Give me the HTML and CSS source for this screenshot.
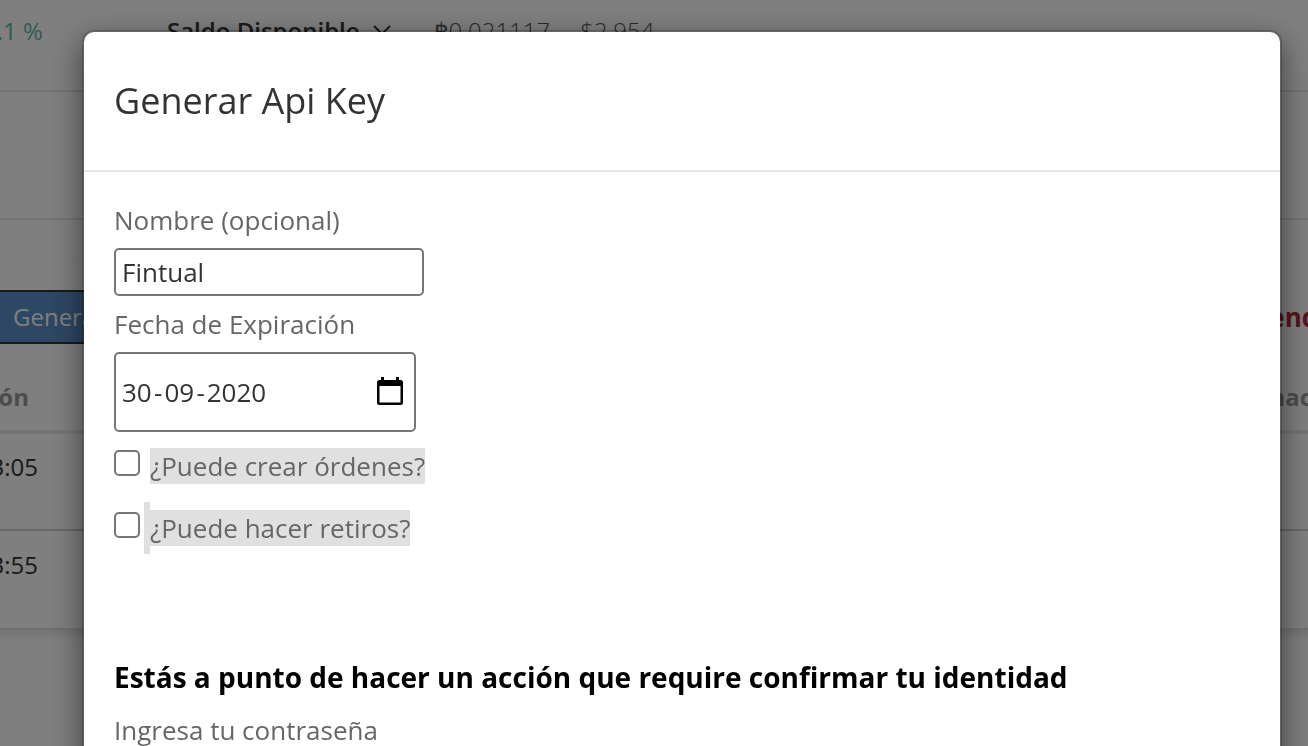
FILE: index.html
```html
<!DOCTYPE html>
<html lang="es">
<head>
<meta charset="utf-8">
<title>Generar Api Key</title>
<link rel="stylesheet" href="styles.css">
</head>
<body>
<div class="page">
  <header class="topbar">
    <span class="change">2.1 %</span>
    <button class="balance" type="button">Saldo Disponible
      <svg class="chevron" viewBox="0 0 20 12" aria-hidden="true"><path d="M2 2l8 8 8-8"/></svg>
    </button>
    <span class="amount">฿0.021117</span>
    <span class="amount">$2.954</span>
  </header>
  <div class="subbar"></div>
  <div class="spacer"></div>
  <main class="card">
    <div class="toolbar">
      <button class="generate" type="button">Generar Api Key</button>
      <strong class="pending">Pendientes</strong>
    </div>
    <table class="keys">
      <thead>
        <tr><th class="created">Creación</th><th class="state">Inactiva</th></tr>
      </thead>
      <tbody>
        <tr><td class="created">13:05</td><td class="state"></td></tr>
        <tr><td class="created">13:55</td><td class="state"></td></tr>
      </tbody>
    </table>
  </main>
</div>

<div class="backdrop">
  <div class="modal" role="dialog" aria-labelledby="modal-title">
    <div class="modal-header"><h1 class="modal-title" id="modal-title">Generar Api Key</h1></div>
    <form class="modal-body">
      <label class="label" for="name">Nombre (opcional)</label>
      <input class="field" id="name" type="text" value="Fintual">
      <label class="label" for="day">Fecha de Expiración</label>
      <div class="date">
        <input class="part" id="day" type="text" value="30" aria-label="Día"><span>-</span>
        <input class="part" type="text" value="09" aria-label="Mes"><span>-</span>
        <input class="part year" type="text" value="2020" aria-label="Año">
        <button class="picker" type="button" aria-label="Abrir calendario">
          <svg class="calendar" viewBox="0 0 26 28" aria-hidden="true"><path fill-rule="evenodd" d="M4 0h3v3h12V0h3v3h1.500a2.500 2.500 0 0 1 2.500 2.500v20a2.500 2.500 0 0 1-2.500 2.500h-21A2.500 2.500 0 0 1 0 25.500v-20A2.500 2.500 0 0 1 2.500 3H4zM2.500 9v16.500h21V9z"/></svg>
        </button>
      </div>
      <div class="check">
        <input class="box" id="orders" type="checkbox">
        <label for="orders"><mark class="selected">¿Puede crear órdenes?</mark></label>
      </div>
      <div class="check">
        <input class="box" id="withdraw" type="checkbox">
        <span class="caret-block"></span>
        <label for="withdraw"><mark class="selected">¿Puede hacer retiros?</mark></label>
      </div>
      <h2 class="confirm">Estás a punto de hacer un acción que require confirmar tu identidad</h2>
      <label class="label" for="password">Ingresa tu contraseña</label>
      <input class="field" id="password" type="password">
    </form>
  </div>
</div>
</body>
</html>
```
FILE: styles.css
```css
* { box-sizing: border-box; }

html, body { height: 100%; }

body {
  margin: 0;
  overflow: hidden;
  background: #fefefe;
  color: #333;
  font-family: "Open Sans", "Noto Sans", sans-serif;
  font-size: 26px;
}

button, input {
  font: inherit;
  color: inherit;
  margin: 0;
}

.page { margin: 0 -120px; }

.topbar {
  display: flex;
  align-items: center;
  height: 92px;
  padding: 0 0 30px 103px;
  border-bottom: 2px solid #e6e6e6;
  font-size: 24px;
  white-space: nowrap;
}

.change { width: 70px; color: #5fb8a8; }

.balance {
  display: flex;
  align-items: center;
  gap: 12px;
  margin-left: 114px;
  margin-right: 42px;
  padding: 0;
  border: 0;
  background: none;
  font-weight: 600;
}

.chevron {
  width: 20px;
  height: 12px;
  fill: none;
  stroke: #333;
  stroke-width: 2;
}

.amount { margin-right: 30px; color: #555; font-weight: 300; }

.subbar { height: 128px; border-bottom: 2px solid #e8e8e8; }

.spacer { height: 40px; }

.card {
  padding-top: 30px;
  background: #fff;
  box-shadow: 0 6px 14px -4px rgba(0, 0, 0, 0.2);
}

.toolbar {
  display: flex;
  align-items: center;
  justify-content: space-between;
}

.generate {
  height: 54px;
  padding: 0 24px 2px;
  margin-left: 107px;
  border: 2px solid #333;
  background: #5a8fc8;
  color: #fff;
  font-size: 24px;
}

.pending { width: 175px; color: #b02a30; }

.keys {
  width: 100%;
  border-collapse: collapse;
  table-layout: fixed;
  font-size: 24px;
}

.keys th {
  height: 88px;
  padding: 18px 0 0;
  border-bottom: 4px solid #eaeaea;
  color: #999;
  font-weight: 700;
}

.keys td { height: 98px; padding: 0 0 30px; }

.keys tr + tr td { border-top: 2px solid #cfcfcf; }

.keys .created { width: 158px; text-align: right; }

.keys th.created { padding-right: 9px; }

.keys .state { text-align: right; }

.keys th.state { padding-right: 70px; }

.backdrop {
  position: fixed;
  inset: 0;
  overflow: hidden;
  padding: 30px 26px 30px 82px;
  background: rgba(0, 0, 0, 0.5);
}

.modal {
  border: 2px solid rgba(0, 0, 0, 0.2);
  border-radius: 12px;
  background: #fff;
  background-clip: padding-box;
  box-shadow: 0 10px 30px rgba(0, 0, 0, 0.5);
}

.modal-header { padding: 30px; border-bottom: 2px solid #e5e5e5; }

.modal-title {
  margin: 0;
  font-size: 36px;
  font-weight: 400;
  line-height: 78px;
}

.modal-body {
  display: flex;
  flex-direction: column;
  align-items: flex-start;
  padding: 30px;
}

.label { color: #666; line-height: 36px; }

.field {
  width: 310px;
  height: 48px;
  margin: 10px 0;
  padding: 0 6px;
  border: 2px solid #767676;
  border-radius: 5px;
  background: #fff;
}

.date {
  display: flex;
  align-items: center;
  gap: 2px;
  width: 302px;
  height: 80px;
  margin: 10px 0 8px;
  padding: 0 11px 0 6px;
  border: 2px solid #767676;
  border-radius: 5px;
}

.part {
  width: 30px;
  padding: 0;
  border: 0;
  background: none;
}

.year { width: 60px; }

.picker {
  display: flex;
  margin-left: auto;
  padding: 0 0 2px;
  border: 0;
  background: none;
}

.calendar { width: 26px; height: 28px; fill: #000; }

.check {
  display: flex;
  align-items: center;
  height: 52px;
  margin-bottom: 10px;
}

.box {
  appearance: none;
  width: 26px;
  height: 26px;
  margin: 0 10px 6px 0;
  border: 2px solid #767676;
  border-radius: 5px;
  background: #fff;
}

.caret-block {
  width: 6px;
  height: 52px;
  margin-left: -6px;
  background: #e0e0e0;
}

.selected {
  display: block;
  background: #e0e0e0;
  color: #666;
  line-height: 36px;
}

.confirm {
  margin: 93px 0 15px;
  color: #000;
  font-size: 28px;
  font-weight: 700;
  line-height: 40px;
}
```
